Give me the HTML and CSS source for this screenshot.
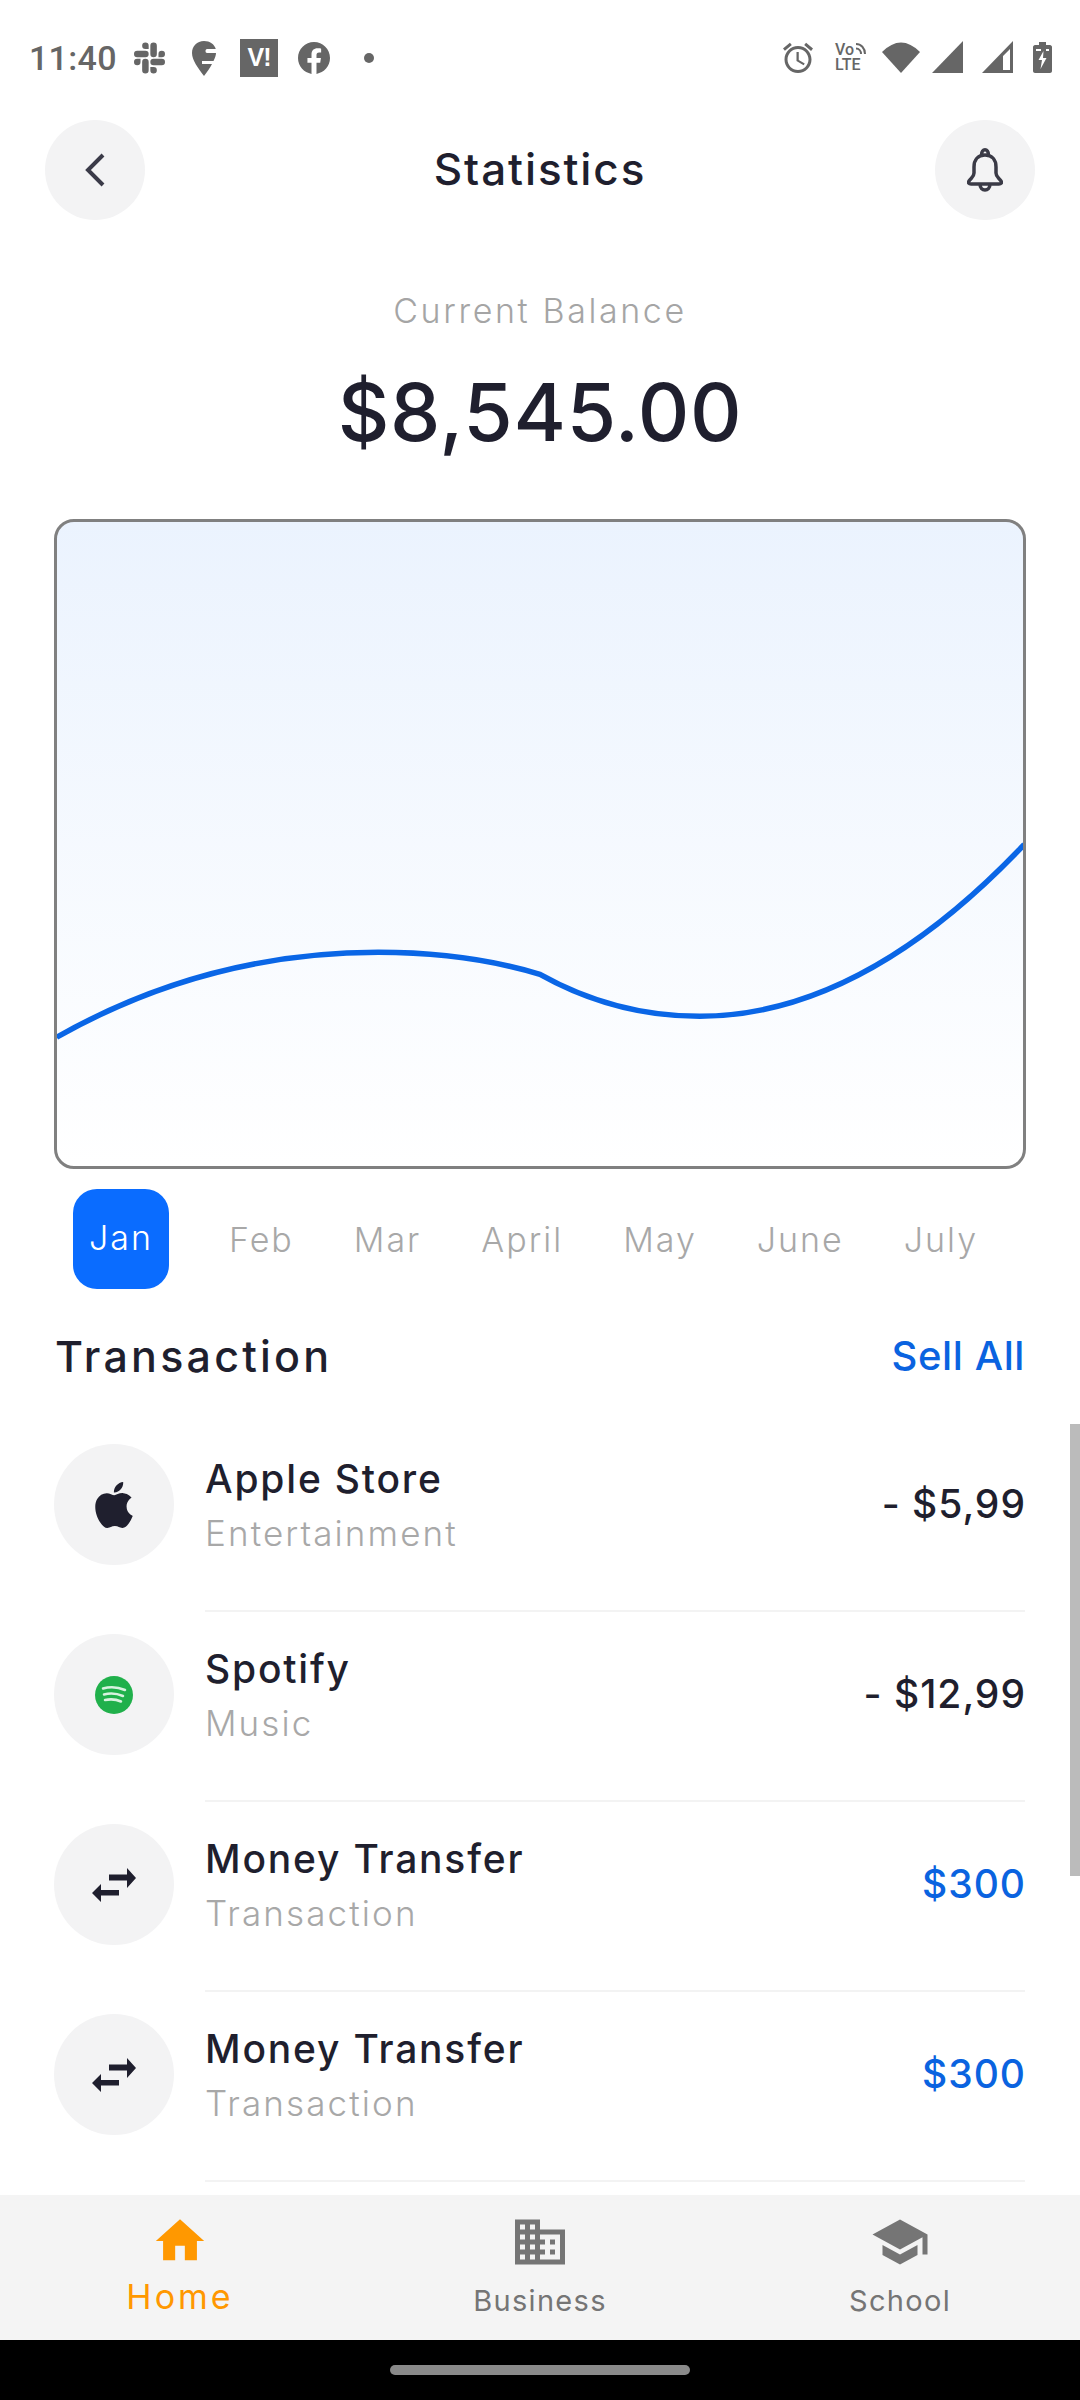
FILE: index.html
```html
<!DOCTYPE html>
<html>
<head>
  <title>Statistics</title>
  <link rel="stylesheet" href="styles.css">
</head>
<body>

<div class="page">

  <!-- phone status bar -->
  <div class="status">
    <span class="status-time">11:40</span>
    <svg class="ic-slack" viewBox="0 0 24 24"><path d="M5.042 15.165a2.528 2.528 0 0 1-2.52 2.523A2.528 2.528 0 0 1 0 15.165a2.527 2.527 0 0 1 2.522-2.52h2.52v2.52zM6.313 15.165a2.527 2.527 0 0 1 2.521-2.52 2.527 2.527 0 0 1 2.521 2.52v6.313A2.528 2.528 0 0 1 8.834 24a2.528 2.528 0 0 1-2.521-2.522v-6.313zM8.834 5.042a2.528 2.528 0 0 1-2.521-2.52A2.528 2.528 0 0 1 8.834 0a2.528 2.528 0 0 1 2.521 2.522v2.52H8.834zM8.834 6.313a2.528 2.528 0 0 1 2.521 2.521 2.528 2.528 0 0 1-2.521 2.521H2.522A2.528 2.528 0 0 1 0 8.834a2.528 2.528 0 0 1 2.522-2.521h6.312zM18.956 8.834a2.528 2.528 0 0 1 2.522-2.521A2.528 2.528 0 0 1 24 8.834a2.528 2.528 0 0 1-2.522 2.521h-2.522V8.834zM17.688 8.834a2.528 2.528 0 0 1-2.523 2.521 2.527 2.527 0 0 1-2.52-2.521V2.522A2.527 2.527 0 0 1 15.165 0a2.528 2.528 0 0 1 2.523 2.522v6.312zM15.165 18.956a2.528 2.528 0 0 1 2.523 2.522A2.528 2.528 0 0 1 15.165 24a2.527 2.527 0 0 1-2.52-2.522v-2.522h2.52zM15.165 17.688a2.527 2.527 0 0 1-2.52-2.523 2.526 2.526 0 0 1 2.52-2.52h6.313A2.527 2.527 0 0 1 24 15.165a2.528 2.528 0 0 1-2.522 2.523h-6.313z"/></svg>
    <svg class="ic-pin" viewBox="0 0 24 35"><path fill-rule="evenodd" d="M12 0C5 0 0 5 0 12c0 7 6 15 12 23 3-4 6-8 8-12H10v-3h11.500c1.500-3 2.500-6 2.500-8h-9c-1 0-1.500-1-1.500-2s.5-2 1.500-2h8.800C22.300 3 18 0 12 0z"/></svg>
    <span class="ic-vi">V!</span>
    <svg class="ic-fb" viewBox="0 0 24 24"><path d="M24 12.073c0-6.627-5.373-12-12-12s-12 5.373-12 12c0 5.99 4.388 10.954 10.125 11.854v-8.385H7.078v-3.47h3.047V9.43c0-3.007 1.792-4.669 4.533-4.669 1.312 0 2.686.235 2.686.235v2.953H15.83c-1.491 0-1.956.925-1.956 1.874v2.25h3.328l-.532 3.47h-2.796v8.385C19.612 23.027 24 18.062 24 12.073z"/></svg>
    <span class="status-dot"></span>

    <svg class="ic-alarm" viewBox="2 2 20 20"><path d="M22 5.72l-4.6-3.86-1.29 1.53 4.6 3.86L22 5.72zM7.88 3.39L6.6 1.86 2 5.71l1.29 1.53 4.59-3.85zM12.5 8H11v6l4.75 2.85.75-1.23-4-2.37V8zM12 4c-4.97 0-9 4.03-9 9s4.02 9 9 9c4.97 0 9-4.03 9-9s-4.03-9-9-9zm0 16c-3.87 0-7-3.13-7-7s3.13-7 7-7 7 3.13 7 7-3.13 7-7 7z"/></svg>
    <div class="ic-volte">
      <div class="volte-top">Vo<svg viewBox="0 0 12 13"><path d="M1 2c5 0 9 4 9 10M1 6.500c3 0 5 2.500 5 5.500" fill="none" stroke="#666" stroke-width="2"/></svg></div>
      <div>LTE</div>
    </div>
    <svg class="ic-wifi" viewBox="0 0 38 32"><path d="M0 11Q19-8 38 11L19 32Z"/></svg>
    <svg class="ic-signal" viewBox="0 0 31 32"><path d="M31 0V32H0Z"/></svg>
    <svg class="ic-signal ic-signal-2" viewBox="0 0 31 32"><path fill-rule="evenodd" d="M31 0V32H0ZM28 8l-7 7V29h7Z"/></svg>
    <svg class="ic-battery" viewBox="0 0 19 31"><path fill-rule="evenodd" d="M6 0h7v3h4c1 0 2 1 2 2v24c0 1-1 2-2 2H2c-1 0-2-1-2-2V5c0-1 1-2 2-2h4ZM3 7v2h5V7ZM13 7v2h3V7ZM10.500 9 5.500 18H9l-1.500 9 6-11H10Z"/></svg>
  </div>

  <div class="main">
    <div class="header">
      <div class="round-btn">
        <svg class="ic-back" viewBox="0 0 20 34"><path d="M18 2 3 17l15 15"/></svg>
      </div>
      <h1 class="title">Statistics</h1>
      <div class="round-btn">
        <svg class="ic-bell" viewBox="0 0 36 45"><path d="M18 7c-7 0-11 5-11 12v6c0 4-3 5-5 8-1 2 0 3 2 3h28c2 0 3-1 2-3-2-3-5-4-5-8v-6c0-7-4-12-11-12zM14.500 7c0-7 7-7 7 0M13 36c0 8 10 8 10 0"/></svg>
      </div>
    </div>

    <div class="balance-label">Current Balance</div>
    <div class="balance">$8,545.00</div>

    <div class="chart">
      <svg viewBox="0 0 966 645">
        <path d="M-1 516C105 456 213 431 321 431C378 431 433 438 483 453C533 481 588 495 643 495C768 495 878 418 968 323"/>
      </svg>
    </div>

    <div class="months">
      <span class="month month-active">Jan</span>
      <span class="month">Feb</span>
      <span class="month">Mar</span>
      <span class="month">April</span>
      <span class="month">May</span>
      <span class="month">June</span>
      <span class="month">July</span>
    </div>

    <div class="section-head">
      <h2 class="section-title">Transaction</h2>
      <span class="section-link">Sell All</span>
    </div>

    <div class="tx">
      <div class="tx-icon">
        <svg class="ic-apple" viewBox="0 0 24 24"><path d="M12.152 6.896c-.948 0-2.415-1.078-3.96-1.04-2.04.027-3.91 1.183-4.961 3.014-2.117 3.675-.546 9.103 1.519 12.09 1.013 1.454 2.208 3.09 3.792 3.039 1.52-.065 2.09-.987 3.935-.987 1.831 0 2.35.987 3.96.948 1.637-.026 2.676-1.48 3.676-2.948 1.156-1.688 1.636-3.325 1.662-3.415-.039-.013-3.182-1.221-3.22-4.857-.026-3.04 2.48-4.494 2.597-4.559-1.429-2.09-3.623-2.324-4.39-2.376-2-.156-3.675 1.09-4.61 1.09zM15.53 3.83c.843-1.012 1.4-2.427 1.245-3.83-1.207.052-2.662.805-3.532 1.818-.78.896-1.454 2.338-1.273 3.714 1.338.104 2.715-.688 3.559-1.701"/></svg>
      </div>
      <div class="tx-body">
        <div class="tx-info">
          <div class="tx-name">Apple Store</div>
          <div class="tx-type">Entertainment</div>
        </div>
        <div class="tx-amount">- $5,99</div>
      </div>
    </div>

    <div class="tx">
      <div class="tx-icon">
        <svg class="ic-spotify" viewBox="0 0 38 38"><circle cx="19" cy="19" r="19" fill="#20b04b"/><path d="M8 12.500c7-2 15-1.500 22 1.500M9 18.500c6-1.500 13-1 19 1.500M10 24c5-1 11-.8 16 1.500" fill="none" stroke="#d8f2df" stroke-width="2.500" stroke-linecap="round"/></svg>
      </div>
      <div class="tx-body">
        <div class="tx-info">
          <div class="tx-name">Spotify</div>
          <div class="tx-type">Music</div>
        </div>
        <div class="tx-amount">- $12,99</div>
      </div>
    </div>

    <div class="tx">
      <div class="tx-icon">
        <svg class="ic-swap" viewBox="0 0 44 34"><path d="M17 6.500h18V0l9 10-9 10v-7.500H17zM27 22H9v-6L0 25l9 9v-6.500h18z"/></svg>
      </div>
      <div class="tx-body">
        <div class="tx-info">
          <div class="tx-name">Money Transfer</div>
          <div class="tx-type">Transaction</div>
        </div>
        <div class="tx-amount tx-amount-in">$300</div>
      </div>
    </div>

    <div class="tx">
      <div class="tx-icon">
        <svg class="ic-swap" viewBox="0 0 44 34"><path d="M17 6.500h18V0l9 10-9 10v-7.500H17zM27 22H9v-6L0 25l9 9v-6.500h18z"/></svg>
      </div>
      <div class="tx-body">
        <div class="tx-info">
          <div class="tx-name">Money Transfer</div>
          <div class="tx-type">Transaction</div>
        </div>
        <div class="tx-amount tx-amount-in">$300</div>
      </div>
    </div>

    <div class="scrollbar"></div>
  </div>

  <div class="nav">
    <div class="nav-item nav-item-active">
      <svg class="nav-icon" viewBox="0 0 24 24"><path d="M10 20v-6h4v6h5v-8h3L12 3 2 12h3v8z"/></svg>
      <span class="nav-label">Home</span>
    </div>
    <div class="nav-item">
      <svg class="nav-icon" viewBox="0 0 24 24"><path d="M12 7V3H2v18h20V7H12zM6 19H4v-2h2v2zm0-4H4v-2h2v2zm0-4H4V9h2v2zm0-4H4V5h2v2zm4 12H8v-2h2v2zm0-4H8v-2h2v2zm0-4H8V9h2v2zm0-4H8V5h2v2zm10 12h-8v-2h2v-2h-2v-2h2v-2h-2V9h8v10zm-2-8h-2v2h2v-2zm0 4h-2v2h2v-2z"/></svg>
      <span class="nav-label">Business</span>
    </div>
    <div class="nav-item">
      <svg class="nav-icon" viewBox="0 0 24 24"><path d="M5 13.180v4L12 21l7-3.820v-4L12 17l-7-3.820zM12 3L1 9l11 6 9-4.910V17h2V9L12 3z"/></svg>
      <span class="nav-label">School</span>
    </div>
  </div>

  <div class="home-bar"><span class="home-pill"></span></div>

</div>

</body>
</html>
```

FILE: styles.css
```css
* {
  box-sizing: border-box;
}
body {
  margin: 0;
  background: #fff;
  font-family: Inter, "Open Sans", sans-serif;
  color: #1f1f2e;
}
.page {
  width: 1080px;
  height: 2400px;
  display: flex;
  flex-direction: column;
  overflow: hidden;
}

/* status bar */
.status {
  height: 120px;
  flex-shrink: 0;
  display: flex;
  align-items: flex-start;
  padding-left: 29px;
  font-family: Roboto, sans-serif;
  color: #666;
}
.status svg {
  fill: #666;
  flex-shrink: 0;
}
.status-time {
  width: 86px;
  margin-top: 37px;
  font-size: 34px;
  line-height: 42px;
  font-weight: 500;
  letter-spacing: 0.3px;
  white-space: nowrap;
}
.ic-slack {
  width: 31px;
  height: 32px;
  margin: 42px 0 0 19px;
}
.ic-pin {
  width: 24px;
  height: 35px;
  margin: 41px 0 0 27px;
}
.ic-vi {
  width: 38px;
  height: 38px;
  margin: 39px 0 0 24px;
  background: #666;
  color: #fff;
  font-family: "Liberation Sans", sans-serif;
  font-size: 25px;
  font-weight: 700;
  line-height: 36px;
  text-align: center;
  letter-spacing: -1px;
}
.ic-fb {
  width: 32px;
  height: 32px;
  margin: 42px 0 0 20px;
}
.status-dot {
  width: 10px;
  height: 10px;
  margin: 53px 0 0 34px;
  border-radius: 50%;
  background: #666;
}
.ic-alarm {
  width: 30px;
  height: 32px;
  margin: 42px 0 0 auto;
}
.ic-volte {
  width: 34px;
  margin: 42px 0 0 22px;
  font-size: 16px;
  line-height: 16px;
  font-weight: 500;
}
.volte-top {
  display: flex;
  height: 15px;
  line-height: 15px;
}
.volte-top svg {
  width: 12px;
  height: 13px;
  fill: none;
  margin-left: 1px;
}
.ic-wifi {
  width: 38px;
  height: 32px;
  margin: 41px 0 0 13px;
}
.ic-signal {
  width: 31px;
  height: 32px;
  margin: 41px 0 0 12px;
}
.ic-signal-2 {
  margin-left: 19px;
}
.ic-battery {
  width: 19px;
  height: 31px;
  margin: 42px 28px 0 20px;
}

/* main scroll area */
.main {
  position: relative;
  flex: 1;
  min-height: 0;
  overflow: hidden;
}
.header {
  display: flex;
  align-items: center;
  justify-content: space-between;
  padding: 0 45px;
}
.round-btn {
  width: 100px;
  height: 100px;
  border-radius: 50%;
  background: #f3f3f4;
  display: flex;
  align-items: center;
  justify-content: center;
}
.ic-back {
  width: 20px;
  height: 34px;
  fill: none;
  stroke: #3a3a48;
  stroke-width: 4;
}
.ic-bell {
  width: 36px;
  height: 45px;
  fill: none;
  stroke: #3a3a46;
  stroke-width: 3.5;
}
.title {
  margin: 0 0 3px;
  font-size: 44px;
  line-height: 60px;
  font-weight: 500;
  letter-spacing: 1.9px;
}
.balance-label {
  margin-top: 66px;
  text-align: center;
  font-size: 34px;
  line-height: 50px;
  font-weight: 300;
  letter-spacing: 2.6px;
  color: #a5a5a5;
}
.balance {
  margin-top: 26px;
  text-align: center;
  font-size: 80px;
  line-height: 100px;
  font-weight: 500;
  letter-spacing: 0.7px;
}
.chart {
  height: 650px;
  margin: 57px 54px 0;
  border: 3px solid #808080;
  border-radius: 20px;
  overflow: hidden;
  background: linear-gradient(#ebf3fe, #fff);
}
.chart svg {
  display: block;
  width: 100%;
  height: 100%;
}
.chart path {
  fill: none;
  stroke: #0a66e6;
  stroke-width: 5.5;
}

/* months */
.months {
  display: flex;
  align-items: center;
  gap: 60px;
  height: 100px;
  margin: 20px 0 0 73px;
}
.month {
  font-size: 34px;
  font-weight: 300;
  letter-spacing: 2px;
  color: #a8a8a8;
}
.month-active {
  height: 100px;
  padding: 0 16px;
  border-radius: 24px;
  background: #0a6cff;
  color: #fff;
  line-height: 98px;
}

.section-head {
  display: flex;
  align-items: center;
  justify-content: space-between;
  height: 60px;
  margin: 38px 55px 35px;
  padding-bottom: 3px;
}
.section-title {
  margin: 0;
  font-size: 43px;
  font-weight: 500;
  letter-spacing: 3.2px;
}
.section-link {
  font-size: 40px;
  font-weight: 500;
  letter-spacing: 0.6px;
  color: #0a63e0;
}

/* transactions */
.tx {
  display: flex;
  gap: 31px;
  padding: 22px 55px 0 54px;
}
.tx-icon {
  width: 120px;
  height: 121px;
  flex-shrink: 0;
  border-radius: 50%;
  background: #f3f3f4;
  display: flex;
  align-items: center;
  justify-content: center;
}
.ic-apple {
  width: 46px;
  height: 46px;
  fill: #1f1f2e;
}
.ic-spotify {
  width: 38px;
  height: 38px;
}
.ic-swap {
  width: 44px;
  height: 34px;
  fill: #1f1f2e;
}
.tx-body {
  flex: 1;
  height: 168px;
  display: flex;
  justify-content: space-between;
  border-bottom: 2px solid #f3f3f3;
}
.tx-info {
  margin-top: 8px;
}
.tx-name {
  font-size: 39px;
  line-height: 54px;
  font-weight: 500;
  letter-spacing: 1.8px;
}
.tx-type {
  font-size: 35px;
  line-height: 54px;
  font-weight: 300;
  letter-spacing: 2.1px;
  color: #a8a8a8;
}
.tx-amount {
  margin-right: -1px;
  font-size: 39px;
  line-height: 120px;
  font-weight: 500;
  letter-spacing: 1px;
}
.tx-amount-in {
  color: #0a63e0;
}
.scrollbar {
  position: absolute;
  top: 1304px;
  right: 0;
  width: 10px;
  height: 452px;
  background: #bbb;
}

/* bottom nav */
.nav {
  height: 145px;
  flex-shrink: 0;
  display: flex;
  background: #f4f4f4;
}
.nav-item {
  flex: 1;
  display: flex;
  flex-direction: column;
  align-items: center;
  padding-top: 17px;
  color: #757575;
}
.nav-icon {
  width: 60px;
  height: 60px;
  fill: currentColor;
}
.nav-label {
  margin-top: 9px;
  font-size: 29px;
  line-height: 40px;
  letter-spacing: 1.3px;
}
.nav-item-active {
  color: #ff9800;
}
.nav-item-active .nav-icon {
  width: 58px;
  height: 58px;
}
.nav-item-active .nav-label {
  margin-top: 7px;
  font-size: 34px;
  letter-spacing: 3px;
}
.home-bar {
  height: 60px;
  flex-shrink: 0;
  background: #000;
  display: flex;
  justify-content: center;
  padding-top: 25px;
}
.home-pill {
  width: 300px;
  height: 10px;
  border-radius: 5px;
  background: #8a8a8a;
}
```
